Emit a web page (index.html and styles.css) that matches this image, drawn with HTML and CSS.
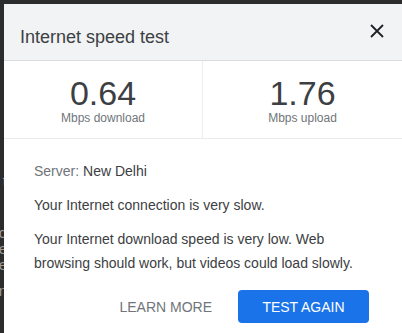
FILE: index.html
```html
<!DOCTYPE html>
<html lang="en">
<head>
<meta charset="utf-8">
<title>Internet speed test</title>
<link rel="stylesheet" href="styles.css">
</head>
<body>
<div class="page">
  <div class="backdrop">
    <span class="frag f1">t</span>
    <span class="frag f2">d</span>
    <span class="frag f3">e</span>
    <span class="frag f4">e</span>
    <span class="frag f5">n</span>
  </div>
  <div class="dialog">
    <div class="header">
      <div class="title">Internet speed test</div>
      <svg class="close" width="14" height="14" viewBox="0 0 14 14" aria-label="Close">
        <path d="M1 1 L13 13 M13 1 L1 13" stroke="#202124" stroke-width="1.8" fill="none"/>
      </svg>
    </div>
    <div class="stats">
      <div class="stat">
        <div class="value">0.64</div>
        <div class="unit">Mbps download</div>
      </div>
      <div class="stat">
        <div class="value">1.76</div>
        <div class="unit">Mbps upload</div>
      </div>
    </div>
    <div class="body">
      <p class="line"><span class="muted">Server:</span> New Delhi</p>
      <p class="line">Your Internet connection is very slow.</p>
      <p class="line">Your Internet download speed is very low. Web browsing should work, but videos could load slowly.</p>
      <div class="actions">
        <button class="btn-text">LEARN MORE</button>
        <button class="btn-primary">TEST AGAIN</button>
      </div>
    </div>
  </div>
</div>
</body>
</html>
```
FILE: styles.css
```css
html, body {
  margin: 0;
  padding: 0;
  height: 100%;
  overflow: hidden;
}
body {
  background: #2c2c2c;
  font-family: "Liberation Sans", Arial, sans-serif;
}
.page {
  display: flex;
  padding-top: 4px;
  height: 100%;
  box-sizing: border-box;
}
.backdrop {
  width: 4px;
  flex: none;
  display: flex;
  flex-direction: column;
  overflow: hidden;
  direction: rtl;
  color: #9a9a9a;
  font-size: 15px;
  line-height: 14px;
}
.frag {
  display: block;
  white-space: nowrap;
  margin-right: -3px;
}
.f1 { margin-top: 170px; }
.f2 { margin-top: 38px; }
.f3 { margin-top: 2px; }
.f4 { margin-top: 2px; }
.f5 { margin-top: 12px; }
.dialog {
  flex: 1;
  background: #ffffff;
  display: flex;
  flex-direction: column;
}
.header {
  height: 57px;
  box-sizing: border-box;
  background: #f1f3f4;
  border-bottom: 1px solid #dadce0;
  display: flex;
  justify-content: space-between;
  align-items: flex-start;
  padding: 0 18px 0 16px;
}
.title {
  margin-top: 21px;
  font-size: 18px;
  line-height: 24px;
  color: #3c4043;
}
.close {
  margin-top: 20px;
  display: block;
}
.stats {
  display: grid;
  grid-template-columns: 1fr 1fr;
  border-bottom: 1px solid #ebebeb;
}
.stat {
  text-align: center;
  padding: 15px 0 12px;
}
.stat:first-child {
  border-right: 1px solid #ededed;
}
.value {
  font-size: 34px;
  line-height: 34px;
  color: #3c4043;
}
.unit {
  font-size: 12px;
  line-height: 16px;
  color: #70757a;
}
.body {
  padding: 20px 30px 0;
  display: flex;
  flex-direction: column;
  gap: 10px;
}
.line {
  margin: 0;
  font-size: 14px;
  line-height: 24px;
  color: #3c4043;
}
.muted {
  color: #70757a;
}
.actions {
  display: flex;
  justify-content: flex-end;
  align-items: center;
  gap: 26px;
  margin-top: 5px;
  margin-right: 3px;
}
.btn-text, .btn-primary {
  font-family: "Liberation Sans", Arial, sans-serif;
  font-size: 14px;
  border: none;
  cursor: pointer;
  height: 33px;
}
.btn-text {
  background: transparent;
  color: #70757a;
  padding: 0;
}
.btn-primary {
  background: #1a73e8;
  color: #ffffff;
  border-radius: 4px;
  padding: 0 24px;
  width: 131px;
}
```
